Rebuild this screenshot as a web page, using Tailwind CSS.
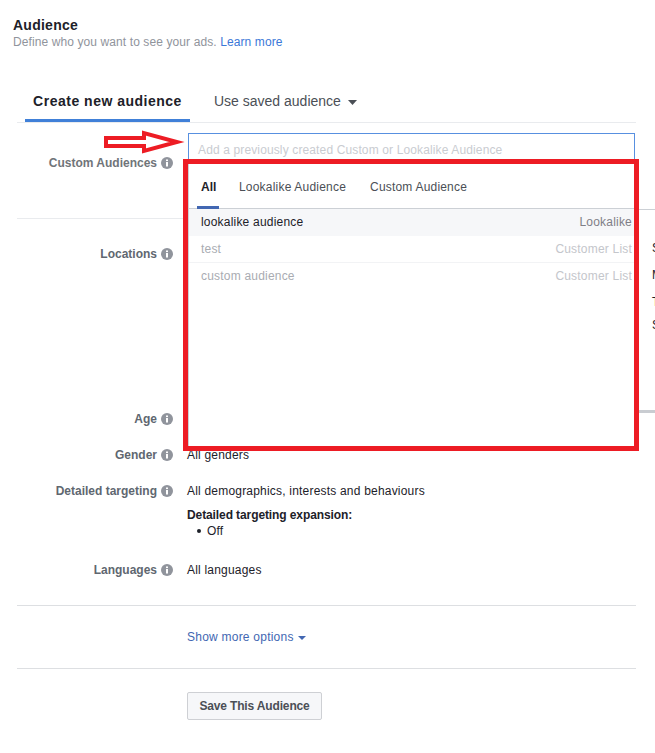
<!DOCTYPE html>
<html>
<head>
<meta charset="utf-8">
<script src="https://cdn.jsdelivr.net/npm/@tailwindcss/browser@4"></script>
</head>
<body class="bg-white">
<div class="relative w-[655px] h-[753px] overflow-hidden bg-white font-['Liberation_Sans',Arial,sans-serif] text-[12px] tracking-[0.2px] text-[#1d2129]">

    <!-- header -->
    <div class="pl-[13px] pt-[17px]">
        <h1 class="text-[14px] leading-[17px] font-bold tracking-[0.25px]">Audience</h1>
        <p class="text-[12px] leading-[17px] tracking-[0.1px] text-[#90949c]">Define who you want to see your ads. <a class="text-[#3b78d8]">Learn more</a></p>
    </div>

    <!-- tabs -->
    <div class="ml-[17px] mr-[19px] mt-[36px] h-[36px] flex border-b border-[#e9ebee]">
        <div class="ml-[8px] w-[165px] h-[35px] border-b-[3px] border-[#4080d8] text-center text-[14px] leading-[29px] font-bold tracking-[0.5px]">Create new audience</div>
        <div class="ml-[24px] flex items-center h-[29px] text-[14px] tracking-normal text-[#4b4f56]">Use saved audience
            <svg class="ml-[7px] mt-[2px]" width="9" height="5" viewBox="0 0 9 5"><path d="M0 0h9L4.500 5z" fill="#4b4f56"/></svg>
        </div>
    </div>

    <!-- custom audiences -->
    <div class="ml-[17px] mr-[19px] h-[96px] border-b border-[#e9ebee] flex">
        <div class="w-[156px] pt-[32px] flex justify-end items-center h-[47px] gap-[4px] font-bold tracking-normal text-[#707479]">Custom Audiences
            <svg width="12" height="12" viewBox="0 0 12 12"><circle cx="6" cy="6" r="6" fill="#90949c"/><rect x="5" y="5" width="2" height="4.500" fill="#fff"/><rect x="5" y="2.500" width="2" height="1.600" fill="#fff"/></svg>
        </div>
        <div class="ml-[15px] mt-[10px] w-[447px] h-[40px] border border-[#5890e0] pl-[9px] pt-[7px] tracking-[0.13px] text-[#c9ccd1]">Add a previously created Custom or Lookalike Audience</div>
    </div>

    <!-- targeting rows -->
    <div class="ml-[17px] mr-[19px] h-[387px] border-b border-[#dddfe2] relative">
        <div class="flex pt-[27px] h-[192px]">
            <div class="w-[156px] flex justify-end items-center h-[16px] gap-[4px] font-bold tracking-normal text-[#606770]">Locations
                <svg width="12" height="12" viewBox="0 0 12 12"><circle cx="6" cy="6" r="6" fill="#90949c"/><rect x="5" y="5" width="2" height="4.500" fill="#fff"/><rect x="5" y="2.500" width="2" height="1.600" fill="#fff"/></svg>
            </div>
        </div>
        <div class="flex h-[36px]">
            <div class="w-[156px] flex justify-end items-center h-[16px] gap-[4px] font-bold tracking-normal text-[#606770]">Age
                <svg width="12" height="12" viewBox="0 0 12 12"><circle cx="6" cy="6" r="6" fill="#90949c"/><rect x="5" y="5" width="2" height="4.500" fill="#fff"/><rect x="5" y="2.500" width="2" height="1.600" fill="#fff"/></svg>
            </div>
        </div>
        <div class="flex h-[36px]">
            <div class="w-[156px] flex justify-end items-center h-[16px] gap-[4px] font-bold tracking-normal text-[#606770]">Gender
                <svg width="12" height="12" viewBox="0 0 12 12"><circle cx="6" cy="6" r="6" fill="#90949c"/><rect x="5" y="5" width="2" height="4.500" fill="#fff"/><rect x="5" y="2.500" width="2" height="1.600" fill="#fff"/></svg>
            </div>
            <div class="ml-[14px] leading-[16px]">All genders</div>
        </div>
        <div class="flex h-[79px]">
            <div class="w-[156px] flex justify-end items-center h-[16px] gap-[4px] font-bold tracking-normal text-[#606770]">Detailed targeting
                <svg width="12" height="12" viewBox="0 0 12 12"><circle cx="6" cy="6" r="6" fill="#90949c"/><rect x="5" y="5" width="2" height="4.500" fill="#fff"/><rect x="5" y="2.500" width="2" height="1.600" fill="#fff"/></svg>
            </div>
            <div class="ml-[14px] leading-[16px]">
                <div>All demographics, interests and behaviours</div>
                <div class="mt-[8px] font-bold tracking-[-0.1px]">Detailed targeting expansion:</div>
                <div class="flex items-center">
                    <span class="ml-[10px] w-[4px] h-[4px] rounded-full bg-[#1d2129]"></span>
                    <span class="ml-[6px]">Off</span>
                </div>
            </div>
        </div>
        <div class="flex">
            <div class="w-[156px] flex justify-end items-center h-[16px] gap-[4px] font-bold tracking-normal text-[#606770]">Languages
                <svg width="12" height="12" viewBox="0 0 12 12"><circle cx="6" cy="6" r="6" fill="#90949c"/><rect x="5" y="5" width="2" height="4.500" fill="#fff"/><rect x="5" y="2.500" width="2" height="1.600" fill="#fff"/></svg>
            </div>
            <div class="ml-[14px] leading-[16px]">All languages</div>
        </div>
    </div>

    <!-- show more -->
    <div class="ml-[17px] mr-[19px] h-[63px] border-b border-[#dddfe2] pl-[170px] flex items-center tracking-[0.23px] text-[#4267b2]">Show more options
        <svg class="ml-[4px] mt-[2px]" width="8" height="4" viewBox="0 0 8 4"><path d="M0 0h8L4 4z" fill="#4267b2"/></svg>
    </div>

    <!-- save -->
    <div class="ml-[187px] mt-[23px]">
        <button class="w-[135px] h-[28px] rounded-[2px] border border-[#ced0d4] bg-[#f6f7f9] font-bold tracking-[-0.15px] text-[#4b4f56]">Save This Audience</button>
    </div>

    <!-- dropdown boxed in red (annotation) -->
    <div class="absolute left-[183px] top-[159px] w-[456px] h-[292px] border-[5px] border-[#ed1c24] bg-white">
        <div class="h-full border-l border-[#ccd0d5]">
            <div class="h-[45px] border-b border-[#ccd0d5] flex pl-[8px]">
                <div class="h-[45px] w-[22px] border-b-[3px] border-[#4267b2] pt-[15px] pl-[4px] leading-[16px] font-bold tracking-normal">All</div>
                <div class="ml-[20px] pt-[15px] leading-[16px] text-[#4b4f56]">Lookalike Audience</div>
                <div class="ml-[24px] pt-[15px] leading-[16px] text-[#4b4f56]">Custom Audience</div>
            </div>
            <div class="h-[27px] pb-[2px] bg-[#f6f7f9] flex items-center justify-between pl-[12px] pr-[2px]"><span>lookalike audience</span><span class="text-[#7f7f87]">Lookalike</span></div>
            <div class="h-[27px] border-b border-[#f2f3f5] flex items-center justify-between pl-[12px] pr-[2px] text-[#a9acb2]"><span>test</span><span class="text-[#c4c6cb]">Customer List</span></div>
            <div class="h-[27px] pb-[2px] flex items-center justify-between pl-[12px] pr-[2px] text-[#a9acb2]"><span>custom audience</span><span class="text-[#c4c6cb]">Customer List</span></div>
        </div>
    </div>

    <!-- rest of the dropdown, sticking out right of the red box -->
    <div class="absolute left-[639px] top-[209px] w-[16px] h-[204px] border-t border-b-[3px] border-t-[#ccd0d5] border-b-[#c9ccd1] pl-[13px] pt-[25px] overflow-hidden text-[12px] leading-[27px]">
        <div>S</div><div>M</div><div>T</div><div class="-mt-[4px]">S</div>
    </div>

    <!-- red arrow annotation -->
    <svg class="absolute left-[102px] top-[128px]" width="84" height="28" viewBox="0 0 84 28">
        <path d="M4 10H42V5L75 14L42 23V18H4z" fill="#fff" stroke="#ed1c24" stroke-width="4"/>
    </svg>
</div>
</body>
</html>
